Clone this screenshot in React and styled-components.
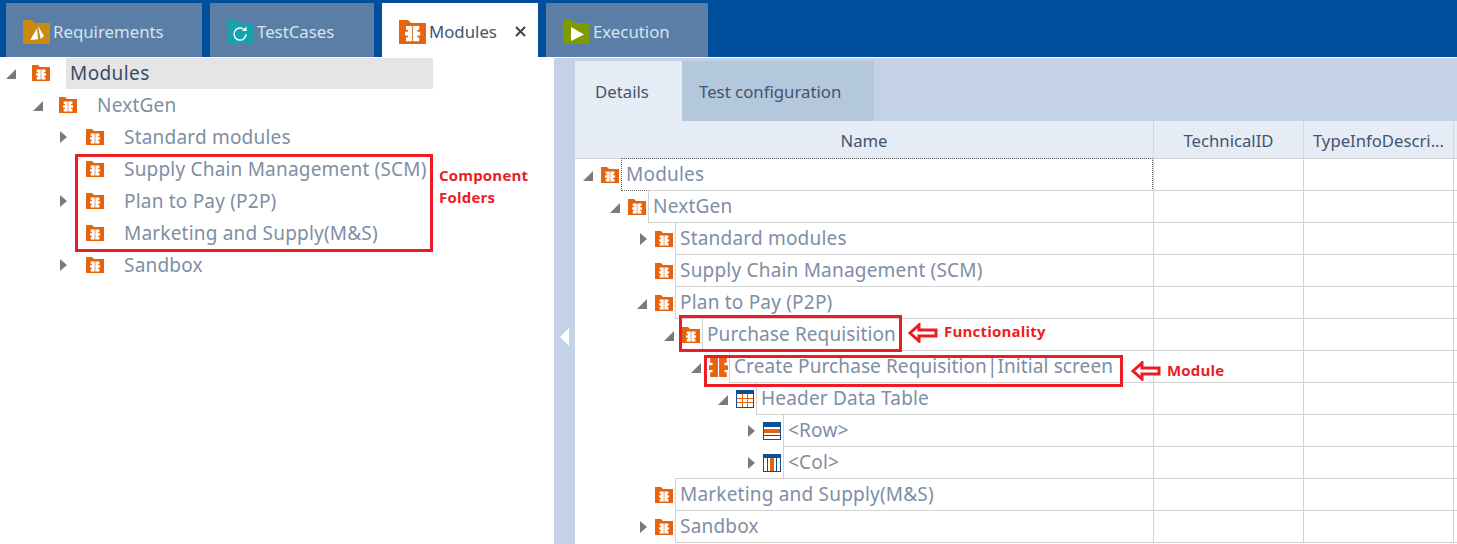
import React from 'react';
import styled, { createGlobalStyle } from 'styled-components';

const Global = createGlobalStyle`
  html, body { margin: 0; padding: 0; background: #fff; }
  body { font-family: "Noto Sans", "Open Sans", sans-serif; overflow: hidden; }
`;

const Page = styled.div`
  position: relative;
  width: 1457px;
  height: 544px;
  overflow: hidden;
  display: flex;
  flex-direction: column;
`;

const TopBar = styled.div`
  height: 57px;
  flex: none;
  background: #004f9c;
  display: flex;
  align-items: flex-end;
  gap: 8px;
  padding-left: 6px;
  box-sizing: border-box;
`;

const Tab = styled.div`
  width: ${p => p.$w}px;
  height: 54px;
  padding-left: 17px;
  box-sizing: border-box;
  display: flex;
  align-items: center;
  gap: 3px;
  background: ${p => (p.$active ? '#fff' : '#5a7ea6')};
  color: ${p => (p.$active ? '#43546e' : '#d9e3ef')};
  font-size: 16.8px;
  position: relative;
`;

const TabLabel = styled.span`
  margin-top: 3px;
`;

const TabIconSvg = styled.svg`
  width: 27px;
  height: 24px;
  flex: none;
  margin-top: 3px;
`;

const Close = styled.svg`
  position: absolute;
  left: 133px;
  top: 23px;
  width: 11px;
  height: 11px;
`;

const Content = styled.div`
  flex: 1;
  display: flex;
  min-height: 0;
`;

const LeftPane = styled.div`
  width: 554px;
  flex: none;
  background: #fff;
`;

const LeftRow = styled.div`
  height: 32px;
  display: flex;
  align-items: center;
  padding-left: ${p => 6 + p.$d * 27}px;
`;

const ArrowSlot = styled.div`
  width: 26px;
  height: 32px;
  flex: none;
  display: flex;
  align-items: center;
`;

const LeftLabel = styled.div`
  margin-left: ${p => (p.$selected ? 16 : 20)}px;
  padding-left: ${p => (p.$selected ? 4 : 0)}px;
  width: ${p => (p.$selected ? '363px' : 'auto')};
  height: 31px;
  margin-top: 1px;
  line-height: 30px;
  background: ${p => (p.$selected ? '#e5e5e5' : 'transparent')};
  color: ${p => (p.$selected ? '#3b4a63' : '#7e8ea3')};
  font-size: 19px;
  letter-spacing: ${p => (p.$selected ? '0.4px' : '0.2px')};
  white-space: nowrap;
`;

const RightPane = styled.div`
  flex: 1;
  display: flex;
  background: #c3d2e5;
  margin-top: 1px;
`;

const Strip = styled.div`
  width: 21px;
  flex: none;
  padding: 270px 0 0 6px;
  box-sizing: border-box;
`;

const Main = styled.div`
  flex: 1;
  display: flex;
  flex-direction: column;
  min-width: 0;
`;

const SubTabs = styled.div`
  height: 63px;
  flex: none;
  display: flex;
  align-items: flex-end;
`;

const SubTab = styled.div`
  width: ${p => p.$w}px;
  height: 60px;
  padding-left: ${p => p.$pad}px;
  box-sizing: border-box;
  background: ${p => (p.$active ? '#e6ecf5' : '#b3c7dd')};
  color: #43546e;
  font-size: 16.8px;
  line-height: 61px;
`;

const HeaderRow = styled.div`
  display: grid;
  grid-template-columns: 578px 150px 150px 1fr;
  height: 38px;
  flex: none;
  box-sizing: border-box;
  background: #e6ecf5;
  border-bottom: 1px solid #d2d5da;
`;

const HeaderCell = styled.div`
  box-sizing: border-box;
  border-left: ${p => (p.$first ? 'none' : '1px solid #d2d5da')};
  color: #43546e;
  font-size: 16.7px;
  line-height: 39px;
  text-align: center;
  white-space: nowrap;
  overflow: hidden;
`;

const Body = styled.div`
  flex: 1;
  background: #fff;
  min-height: 0;
`;

const Row = styled.div`
  display: grid;
  grid-template-columns: 578px 150px 150px 1fr;
  height: 32px;
`;

const NameCell = styled.div`
  display: flex;
  align-items: center;
  padding-left: ${p => 8 + p.$d * 27}px;
  min-width: 0;
`;

const GridArrowSlot = styled.div`
  width: 18px;
  flex: none;
  display: flex;
  align-items: center;
`;

const NameBox = styled.div`
  flex: 1;
  margin-left: 2px;
  height: 33px;
  margin-top: -1px;
  box-sizing: border-box;
  border-style: ${p => (p.$focus ? 'dotted' : 'solid')};
  border-color: ${p => (p.$focus ? '#666' : '#d2d2d2')};
  border-width: ${p => (p.$focus ? '1px' : '1px 0 1px 1px')};
  padding-left: 4px;
  line-height: 30px;
  color: #7e8ea3;
  font-size: 19px;
  letter-spacing: ${p => (p.$tight ? '0.1px' : '0.2px')};
  white-space: nowrap;
`;

const EmptyCell = styled.div`
  height: 33px;
  margin-top: -1px;
  box-sizing: border-box;
  border-left: 1px solid #d2d2d2;
  border-top: 1px solid #d2d2d2;
  border-bottom: 1px solid #d2d2d2;
`;

const RedBox = styled.div`
  position: absolute;
  left: ${p => p.$x}px;
  top: ${p => p.$y}px;
  width: ${p => p.$w}px;
  height: ${p => p.$h}px;
  box-sizing: border-box;
  border: 3px solid #ed1c24;
  pointer-events: none;
`;

const Note = styled.div`
  position: absolute;
  left: ${p => p.$x}px;
  top: ${p => p.$y}px;
  color: #ed1c24;
  font-family: "Open Sans", sans-serif;
  font-weight: 700;
  font-size: 15px;
  letter-spacing: 0.2px;
  line-height: 22px;
  white-space: nowrap;
`;

const RedArrow = styled.svg`
  position: absolute;
  left: ${p => p.$x}px;
  top: ${p => p.$y}px;
  width: 30px;
  height: 20px;
`;

const ORANGE = '#e7640f';

/* 16x16 glyph: two halves split by a slit, each with notched outer edge */
const Chip = ({ x = 0, y = 0, s = 1, fill = '#fff' }) => (
  <g transform={`translate(${x} ${y}) scale(${s})`} fill={fill}>
    <path d="M7.500 0H1v4h2v2H0v4h3v2H1v4h6.500z" />
    <path d="M8.500 0H15v4h-2v2h3v4h-3v2h2v4H8.500z" />
  </g>
);

const FolderIcon = () => (
  <svg width="18" height="16" viewBox="0 0 18 16" style={{ flex: 'none' }}>
    <path d="M0 0h6l2 2h10v14H0z" fill={ORANGE} />
    <Chip x={4.100} y={4.500} s={0.62} />
  </svg>
);

const ModuleIcon = () => (
  <svg width="19" height="19" viewBox="0 0 16 16" style={{ flex: 'none', marginRight: -1 }}>
    <Chip fill={ORANGE} />
  </svg>
);

const TableIcon = () => (
  <svg width="18" height="18" viewBox="0 0 18 18" style={{ flex: 'none' }}>
    <rect x="0.5" y="0.5" width="17" height="17" fill="#fff" stroke="#0d4f97" />
    <rect x="1" y="1" width="16" height="3" fill="#0d4f97" />
    <path d="M1 8.500h16M1 12.500h16M6.500 4v13M11.500 4v13" stroke={ORANGE} strokeWidth="1" fill="none" />
  </svg>
);

const RowIcon = () => (
  <svg width="18" height="18" viewBox="0 0 18 18" style={{ flex: 'none' }}>
    <rect x="0.5" y="0.5" width="17" height="17" fill="#fff" stroke="#0d4f97" />
    <rect x="1" y="1" width="16" height="4" fill="#0d4f97" />
    <rect x="1" y="7" width="16" height="4" fill={ORANGE} />
    <rect x="1" y="13" width="16" height="1" fill="#0d4f97" />
  </svg>
);

const ColIcon = () => (
  <svg width="18" height="18" viewBox="0 0 18 18" style={{ flex: 'none' }}>
    <rect x="0.5" y="0.5" width="17" height="17" fill="#fff" stroke="#0d4f97" />
    <rect x="1" y="1" width="16" height="3" fill="#0d4f97" />
    <rect x="7" y="4" width="4" height="13" fill={ORANGE} />
    <rect x="4" y="4" width="1" height="13" fill="#0d4f97" />
    <rect x="13" y="4" width="1" height="13" fill="#0d4f97" />
  </svg>
);

const Arrow = ({ kind, dx = 0 }) =>
  kind === 'open' ? (
    <svg width="10" height="10" viewBox="0 0 10 10" style={{ marginTop: 2 }}>
      <path d="M10 0V10H0z" fill="#7a7a7a" />
    </svg>
  ) : kind === 'closed' ? (
    <svg width="7" height="12" viewBox="0 0 7 12" style={{ marginLeft: dx }}>
      <path d="M0 0l7 6-7 6z" fill="#7a7a7a" />
    </svg>
  ) : null;

const TabFolder = ({ color, children }) => (
  <TabIconSvg viewBox="0 0 27 24">
    <path d="M0 0h9l3 3h15v21H0z" fill={color} />
    {children}
  </TabIconSvg>
);

const leftItems = [
  { t: 'Modules', d: 0, a: 'open', sel: true },
  { t: 'NextGen', d: 1, a: 'open' },
  { t: 'Standard modules', d: 2, a: 'closed' },
  { t: 'Supply Chain Management (SCM)', d: 2 },
  { t: 'Plan to Pay (P2P)', d: 2, a: 'closed' },
  { t: 'Marketing and Supply(M&S)', d: 2 },
  { t: 'Sandbox', d: 2, a: 'closed' },
];

const gridItems = [
  { t: 'Modules', d: 0, a: 'open', focus: true },
  { t: 'NextGen', d: 1, a: 'open' },
  { t: 'Standard modules', d: 2, a: 'closed' },
  { t: 'Supply Chain Management (SCM)', d: 2 },
  { t: 'Plan to Pay (P2P)', d: 2, a: 'open' },
  { t: 'Purchase Requisition', d: 3, a: 'open', tight: true },
  { t: 'Create Purchase Requisition|Initial screen', d: 4, a: 'open', I: ModuleIcon, tight: true },
  { t: 'Header Data Table', d: 5, a: 'open', I: TableIcon },
  { t: '<Row>', d: 6, a: 'closed', I: RowIcon },
  { t: '<Col>', d: 6, a: 'closed', I: ColIcon },
  { t: 'Marketing and Supply(M&S)', d: 2 },
  { t: 'Sandbox', d: 2, a: 'closed' },
];

const OutlineArrow = ({ x, y }) => (
  <RedArrow $x={x} $y={y} viewBox="0 0 30 20">
    <path d="M2 10L11 2v5h17v6H11v5z" fill="#fff" stroke="#ed1c24" strokeWidth="3" />
  </RedArrow>
);

export default function App() {
  return (
    <Page>
      <Global />
      <TopBar>
        <Tab $w={196}>
          <TabFolder color="#c98a0e">
            <path d="M7.300 20L14 8.300 15 19.300z" fill="#fff" />
            <path d="M15 6l6 10-3.300 3z" fill="#fff" />
          </TabFolder>
          <TabLabel>Requirements</TabLabel>
        </Tab>
        <Tab $w={164}>
          <TabFolder color="#17a2ae">
            <path d="M19 14a6 6 0 1 1-2.500-4.800" fill="none" stroke="#fff" strokeWidth="1.400" />
            <path d="M19.500 6.500V11H15z" fill="#fff" />
          </TabFolder>
          <TabLabel>TestCases</TabLabel>
        </Tab>
        <Tab $w={156} $active>
          <TabFolder color={ORANGE}>
            <Chip x={6} y={6} s={0.95} />
          </TabFolder>
          <TabLabel>Modules</TabLabel>
          <Close viewBox="0 0 11 11">
            <path d="M1 1l9 9M10 1l-9 9" stroke="#3c4656" strokeWidth="2" />
          </Close>
        </Tab>
        <Tab $w={162}>
          <TabFolder color="#7f9a00">
            <path d="M8 7l13 7.500L8 21z" fill="#fff" />
          </TabFolder>
          <TabLabel>Execution</TabLabel>
        </Tab>
      </TopBar>

      <Content>
        <LeftPane>
          {leftItems.map(item => (
            <LeftRow key={item.t} $d={item.d}>
              <ArrowSlot>
                <Arrow kind={item.a} />
              </ArrowSlot>
              <FolderIcon />
              <LeftLabel $selected={item.sel}>{item.t}</LeftLabel>
            </LeftRow>
          ))}
        </LeftPane>

        <RightPane>
          <Strip>
            <svg width="10" height="18" viewBox="0 0 10 18">
              <path d="M9 0v18L0 9z" fill="#fff" />
            </svg>
          </Strip>
          <Main>
            <SubTabs>
              <SubTab $w={107} $pad={20} $active>Details</SubTab>
              <SubTab $w={192} $pad={17}>Test configuration</SubTab>
            </SubTabs>
            <HeaderRow>
              <HeaderCell $first>Name</HeaderCell>
              <HeaderCell>TechnicalID</HeaderCell>
              <HeaderCell>TypeInfoDescri...</HeaderCell>
              <HeaderCell />
            </HeaderRow>
            <Body>
              {gridItems.map(item => {
                const Icon = item.I || FolderIcon;
                return (
                  <Row key={item.t}>
                    <NameCell $d={item.d}>
                      <GridArrowSlot>
                        <Arrow kind={item.a} dx={3} />
                      </GridArrowSlot>
                      <Icon />
                      <NameBox $focus={item.focus} $tight={item.tight}>{item.t}</NameBox>
                    </NameCell>
                    <EmptyCell />
                    <EmptyCell />
                    <EmptyCell />
                  </Row>
                );
              })}
            </Body>
          </Main>
        </RightPane>
      </Content>

      <RedBox $x={75} $y={154} $w={358} $h={98} />
      <RedBox $x={679} $y={315} $w={223} $h={37} />
      <RedBox $x={704} $y={355} $w={419} $h={32} />
      <Note $x={439} $y={164}>Component<br />Folders</Note>
      <Note $x={944} $y={320}>Functionality</Note>
      <Note $x={1167} $y={359}>Module</Note>
      <OutlineArrow x={908} y={323} />
      <OutlineArrow x={1131} y={361} />
    </Page>
  );
}
